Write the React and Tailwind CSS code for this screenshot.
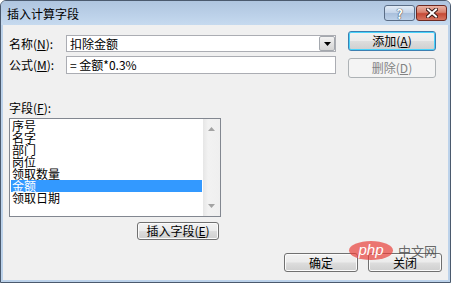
import React from "react";

const items = ["序号", "名字", "部门", "岗位", "领取数量", "金额", "领取日期"];

function Btn({ children, className = "", kind = "normal" }) {
  const look = {
    normal:
      "border-[#707070] text-black bg-[linear-gradient(to_bottom,#f2f2f2_0%,#ebebeb_48%,#dddddd_52%,#cfcfcf_100%)] shadow-[inset_0_0_0_1px_#fbfbfb]",
    focus:
      "border-[#3c7fb1] text-black bg-[linear-gradient(to_bottom,#f2f2f2_0%,#ebebeb_48%,#dddddd_52%,#cfcfcf_100%)] shadow-[inset_0_0_0_1px_#48d3fb]",
    disabled: "border-[#adb2b5] text-[#838383] bg-[#f4f4f4]",
  }[kind];
  return (
    <div className={`flex items-center justify-center border rounded-[3px] text-[12px] leading-none ${look} ${className}`}>
      {children}
    </div>
  );
}

export default function App() {
  return (
    <div className="w-[451px] h-[283px] flex flex-col border border-[#4b5a6e] rounded-t-[6px] bg-[#bcd2ea] overflow-hidden font-['Noto_Sans_CJK_SC',sans-serif] text-black">
      {/* title bar */}
      <div className="h-[24px] shrink-0 flex items-start pl-[6px] pr-[3px] bg-[linear-gradient(to_bottom,#afc5df,#bcd1e9_60%,#c6daef)]">
        <span className="flex-1 text-[12px] leading-none mt-[7px]">插入计算字段</span>
        <div className="flex gap-[1px] mt-[4px]">
          <div className="w-[31px] h-[16px] flex items-center justify-center rounded-[3px] border border-[#5a6d86] bg-[linear-gradient(to_bottom,#e2ebf6,#c3d4e9_48%,#a9bfdb_52%,#bcd0e8)]">
            <span className="text-[13px] font-bold leading-none text-white [text-shadow:0_0_1px_#2b3440,0_0_1px_#2b3440]">?</span>
          </div>
          <div className="w-[31px] h-[16px] flex items-center justify-center rounded-[3px] border border-[#6e2a22] bg-[linear-gradient(to_bottom,#eab3a4,#d9826f_45%,#c54a36_55%,#d67561)]">
            <svg width="12" height="10" viewBox="0 0 12 10">
              <path d="M2 1.5 L10 8.5 M10 1.5 L2 8.5" stroke="#3a1a16" strokeWidth="4" strokeLinecap="square" />
              <path d="M2 1.5 L10 8.5 M10 1.5 L2 8.5" stroke="#ffffff" strokeWidth="2" strokeLinecap="square" />
            </svg>
          </div>
        </div>
      </div>

      {/* client */}
      <div className="relative flex-1 mx-[2px] mb-[2px] bg-[#f0f0f0] flex flex-col px-[6px] pt-[6px]">
        <div className="flex">
          <div className="flex flex-col gap-[4px] mt-[4px]">
            <div className="flex items-center">
              <span className="w-[57px] text-[12px] leading-none">名称(<u>N</u>):</span>
              <div className="w-[270px] h-[17px] flex border border-[#abadb3] bg-white">
                <span className="flex-1 pl-[3px] text-[12px] leading-[15px]">扣除金额</span>
                <div className="w-[16px] h-[15px] flex items-center justify-center border border-[#a4a8ae] rounded-[2px] bg-[linear-gradient(to_bottom,#f3f3f3,#e3e3e3_50%,#d5d5d5)]">
                  <svg width="7" height="4" viewBox="0 0 7 4">
                    <path d="M0 0 H7 L3.5 4 Z" fill="#000" />
                  </svg>
                </div>
              </div>
            </div>
            <div className="flex items-center">
              <span className="w-[57px] text-[12px] leading-none">公式(<u>M</u>):</span>
              <div className="w-[270px] h-[18px] border border-[#abadb3] bg-white pl-[3px] text-[12px] leading-[16px]">
                = 金额*0.3%
              </div>
            </div>
          </div>
          <div className="flex flex-col gap-[7px] ml-[12px]">
            <Btn kind="focus" className="w-[88px] h-[20px]">
              添加(<u>A</u>)
            </Btn>
            <Btn kind="disabled" className="w-[88px] h-[20px]">
              删除(<u>D</u>)
            </Btn>
          </div>
        </div>

        <div className="mt-[24px] h-[13px] text-[12px] leading-none">
          字段(<u>F</u>):
        </div>

        <div className="mt-[3px] w-[212px] flex flex-col">
          <div className="h-[99px] flex border border-[#828790] bg-white overflow-hidden">
            <div className="flex-1 p-[1px] flex flex-col">
              {items.map((t, i) => (
                <div
                  key={t}
                  className={`h-[12px] pl-[1px] text-[12px] leading-[12px] ${i === 5 ? "bg-[#3399ff] text-white" : ""}`}
                >
                  {t}
                </div>
              ))}
            </div>
            <div className="w-[17px] flex flex-col justify-between items-center py-[8px] bg-[linear-gradient(to_right,#e6e6e6,#f2f2f2_30%,#efefef)]">
              <svg width="7" height="4" viewBox="0 0 7 4">
                <path d="M3.5 0 L7 4 H0 Z" fill="#a3a3a3" />
              </svg>
              <svg width="7" height="4" viewBox="0 0 7 4">
                <path d="M0 0 H7 L3.5 4 Z" fill="#a3a3a3" />
              </svg>
            </div>
          </div>
          <Btn className="mt-[5px] ml-auto mr-[2px] w-[82px] h-[18px]">
            插入字段(<u>E</u>)
          </Btn>
        </div>

        <div className="mt-[13px] flex justify-end gap-[10px]">
          <Btn className="w-[74px] h-[19px]">确定</Btn>
          <Btn className="w-[74px] h-[19px]">关闭</Btn>
        </div>

        {/* watermark */}
        <div className="absolute left-[346px] top-[216px] flex items-center pointer-events-none">
          <div className="w-[44px] h-[19px] rounded-[50%] bg-[#e8403a]/70 flex items-center justify-center">
            <span className="text-white italic text-[15px] leading-none font-['Liberation_Sans',sans-serif] -mt-[2px]">php</span>
          </div>
          <span className="ml-[5px] text-[13px] leading-none text-[#444]/80">中文网</span>
        </div>
      </div>
    </div>
  );
}
